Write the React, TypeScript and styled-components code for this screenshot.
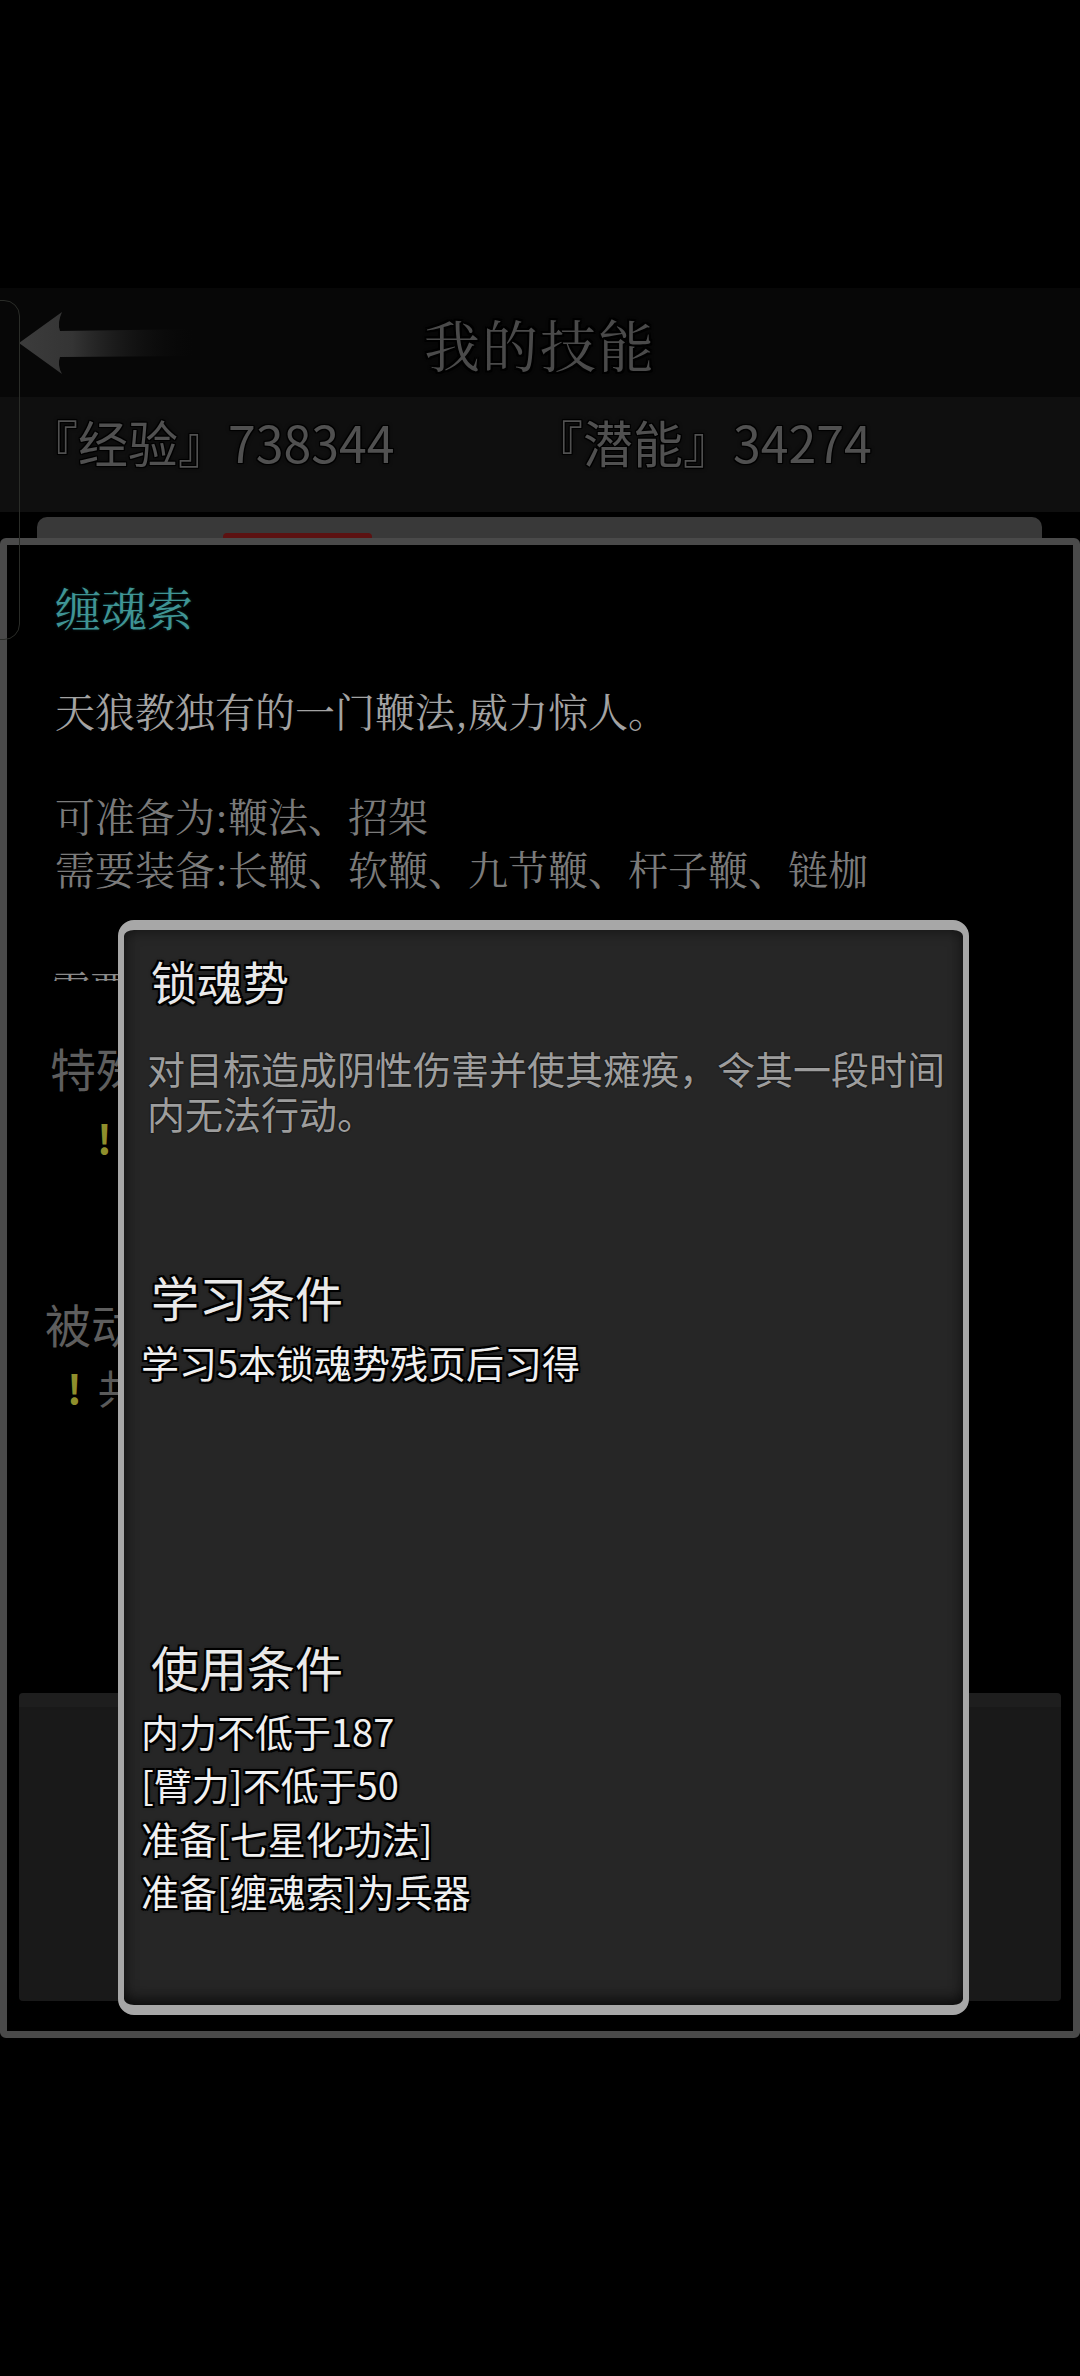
import React from "react";
import styled, { createGlobalStyle } from "styled-components";

const Global = createGlobalStyle`
  html, body {
    margin: 0;
    padding: 0;
    background: #000;
  }
  * { box-sizing: border-box; }
`;

const SANS = `"Noto Sans CJK SC", "Noto Sans", sans-serif`;
const BRUSH = `"Noto Serif CJK SC", "Noto Sans CJK SC", serif`;

const outline = (w: number) =>
  `-${w}px -${w}px 0 #000, ${w}px -${w}px 0 #000, -${w}px ${w}px 0 #000, ${w}px ${w}px 0 #000, 0 ${w}px 0 #000, 0 -${w}px 0 #000, ${w}px 0 0 #000, -${w}px 0 0 #000, 0 0 4px #000`;

const Page = styled.div`
  position: relative;
  width: 1080px;
  height: 2376px;
  background: #000;
  overflow: hidden;
  font-family: ${SANS};
`;

const EdgeTab = styled.div`
  position: absolute;
  left: -20px;
  top: 300px;
  width: 40px;
  height: 340px;
  border: 1px solid #2a2c28;
  border-radius: 16px;
  z-index: 2;
  pointer-events: none;
`;

const Header = styled.div`
  margin-top: 288px;
  height: 109px;
  background: #070707;
  display: grid;
  grid-template-columns: 200px 1fr 200px;
  align-items: center;
`;

const Back = styled.div`
  padding-left: 18px;
  display: flex;
  align-items: center;
`;

const Title = styled.h1`
  margin: 0;
  text-align: center;
  font-family: ${BRUSH};
  font-weight: 400;
  font-size: 56px;
  letter-spacing: 2px;
  color: #4a4a4a;
  text-shadow: ${outline(2)};
`;

const Stats = styled.div`
  height: 115px;
  background: #0f0f0f;
  display: flex;
  padding: 15px 0 0 28px;
`;

const Stat = styled.div`
  width: 505px;
  font-size: 50px;
  line-height: 58px;
  color: #505050;
  text-shadow: ${outline(1)};
`;

const TabStrip = styled.div`
  margin: 5px 38px 0 37px;
  height: 21px;
  background: #393939;
  border-radius: 10px 10px 0 0;
  padding: 16px 0 0 186px;
`;

const ActiveTab = styled.div`
  width: 149px;
  height: 5px;
  background: #5c1212;
  border-radius: 4px 4px 0 0;
`;

const SkillPanel = styled.section`
  height: 1500px;
  border: 7px solid #4a4a4a;
  border-radius: 6px;
  background: #000;
  display: flex;
  flex-direction: column;
`;

const SkillName = styled.div`
  margin: 31px 0 0 48px;
  font-family: ${BRUSH};
  font-size: 46px;
  line-height: 60px;
  color: #3f9494;
  text-shadow: 0 0 3px #0b2a2a, 1px 1px 2px #000;
`;

const Para = styled.div<{ $top: number; $color: string }>`
  margin: ${(p) => p.$top}px 0 0 48px;
  font-family: ${BRUSH};
  font-size: 40px;
  line-height: 53px;
  color: ${(p) => p.$color};
`;

const Clipped = styled.div`
  margin: 68px 0 0 43px;
  height: 19px;
  overflow: hidden;
  font-family: ${BRUSH};
  font-size: 40px;
  line-height: 52px;
  color: #8a8a8a;
`;

const SectionLabel = styled.div<{ $top: number; $left: number }>`
  margin: ${(p) => p.$top}px 0 0 ${(p) => p.$left}px;
  font-size: 46px;
  line-height: 56px;
  color: #5e5e5e;
  white-space: nowrap;
`;

const NoteRow = styled.div<{ $top: number; $left: number }>`
  margin: ${(p) => p.$top}px 0 0 ${(p) => p.$left}px;
  display: flex;
  gap: 16px;
  font-size: 40px;
  line-height: 50px;
  color: #5a5a5a;
  white-space: nowrap;
`;

const Bang = styled.span`
  color: #8f8f2c;
  font-weight: 700;
`;

const Shelf = styled.div`
  margin: 281px 12px 0 12px;
  height: 308px;
  background: linear-gradient(#1e1e1e 0, #1e1e1e 14px, #191919 14px, #191919 100%);
  border-radius: 4px;
`;

const Dialog = styled.div`
  position: absolute;
  left: 118px;
  top: 920px;
  width: 851px;
  height: 1095px;
  border-style: solid;
  border-color: #a7a7a7;
  border-width: 10px 6px 10px 6px;
  border-radius: 16px;
  background: #262626;
  box-shadow: inset 0 0 14px rgba(0, 0, 0, 0.55), inset 0 -14px 16px -8px rgba(0, 0, 0, 0.5);
  display: flex;
  flex-direction: column;
  color: #ececec;
  z-index: 3;
`;

const DialogTitle = styled.div<{ $top: number; $size: number }>`
  margin: ${(p) => p.$top}px 0 0 27px;
  font-size: ${(p) => p.$size}px;
  line-height: 56px;
  color: #e9e9e9;
  text-shadow: ${outline(2)};
`;

const DialogDesc = styled.div`
  margin: 37px 4px 0 23px;
  font-size: 38px;
  line-height: 45px;
  color: #9d9d9d;
  text-shadow: 0 0 2px #000;
`;

const CondList = styled.div<{ $top: number }>`
  margin: ${(p) => p.$top}px 0 0 17px;
  display: flex;
  flex-direction: column;
`;

const Cond = styled.div`
  font-size: 38px;
  line-height: 53.5px;
  color: #f0f0f0;
  text-shadow: ${outline(2)};
  white-space: nowrap;
`;

const BackArrow = () => (
  <svg width="180" height="64" viewBox="0 0 180 64">
    <defs>
      <linearGradient id="fade" x1="0" y1="0" x2="1" y2="0">
        <stop offset="0" stopColor="#3c3c3c" />
        <stop offset="0.3" stopColor="#343434" />
        <stop offset="1" stopColor="#070707" stopOpacity="0" />
      </linearGradient>
    </defs>
    <path
      d="M1 32 L44 1 Q39 12 42 20 L180 18 L180 45 L42 46 Q39 54 44 63 Z"
      fill="url(#fade)"
    />
  </svg>
);

export default function App() {
  return (
    <Page>
      <Global />
      <EdgeTab />
      <Header>
        <Back>
          <BackArrow />
        </Back>
        <Title>我的技能</Title>
        <div />
      </Header>
      <Stats>
        <Stat>『经验』738344</Stat>
        <Stat>『潜能』34274</Stat>
      </Stats>
      <TabStrip>
        <ActiveTab />
      </TabStrip>
      <SkillPanel>
        <SkillName>缠魂索</SkillName>
        <Para $top={47} $color="#a3a3a3">天狼教独有的一门鞭法,威力惊人。</Para>
        <Para $top={52} $color="#7b7b7b">
          可准备为:鞭法、招架
          <br />
          需要装备:长鞭、软鞭、九节鞭、杆子鞭、链枷
        </Para>
        <Clipped>需要内力</Clipped>
        <SectionLabel $top={58} $left={43}>特殊攻击</SectionLabel>
        <NoteRow $top={17} $left={90}>
          <Bang>!</Bang>
        </NoteRow>
        <SectionLabel $top={133} $left={38}>被动技能</SectionLabel>
        <NoteRow $top={11} $left={60}>
          <Bang>!</Bang>
          <span>共</span>
        </NoteRow>
        <Shelf />
      </SkillPanel>

      <Dialog>
        <DialogTitle $top={22} $size={46}>锁魂势</DialogTitle>
        <DialogDesc>对目标造成阴性伤害并使其瘫痪，令其一段时间内无法行动。</DialogDesc>
        <DialogTitle $top={133} $size={48}>学习条件</DialogTitle>
        <CondList $top={11}>
          <Cond>学习5本锁魂势残页后习得</Cond>
        </CondList>
        <DialogTitle $top={249} $size={48}>使用条件</DialogTitle>
        <CondList $top={10}>
          <Cond>内力不低于187</Cond>
          <Cond>[臂力]不低于50</Cond>
          <Cond>准备[七星化功法]</Cond>
          <Cond>准备[缠魂索]为兵器</Cond>
        </CondList>
      </Dialog>
    </Page>
  );
}
